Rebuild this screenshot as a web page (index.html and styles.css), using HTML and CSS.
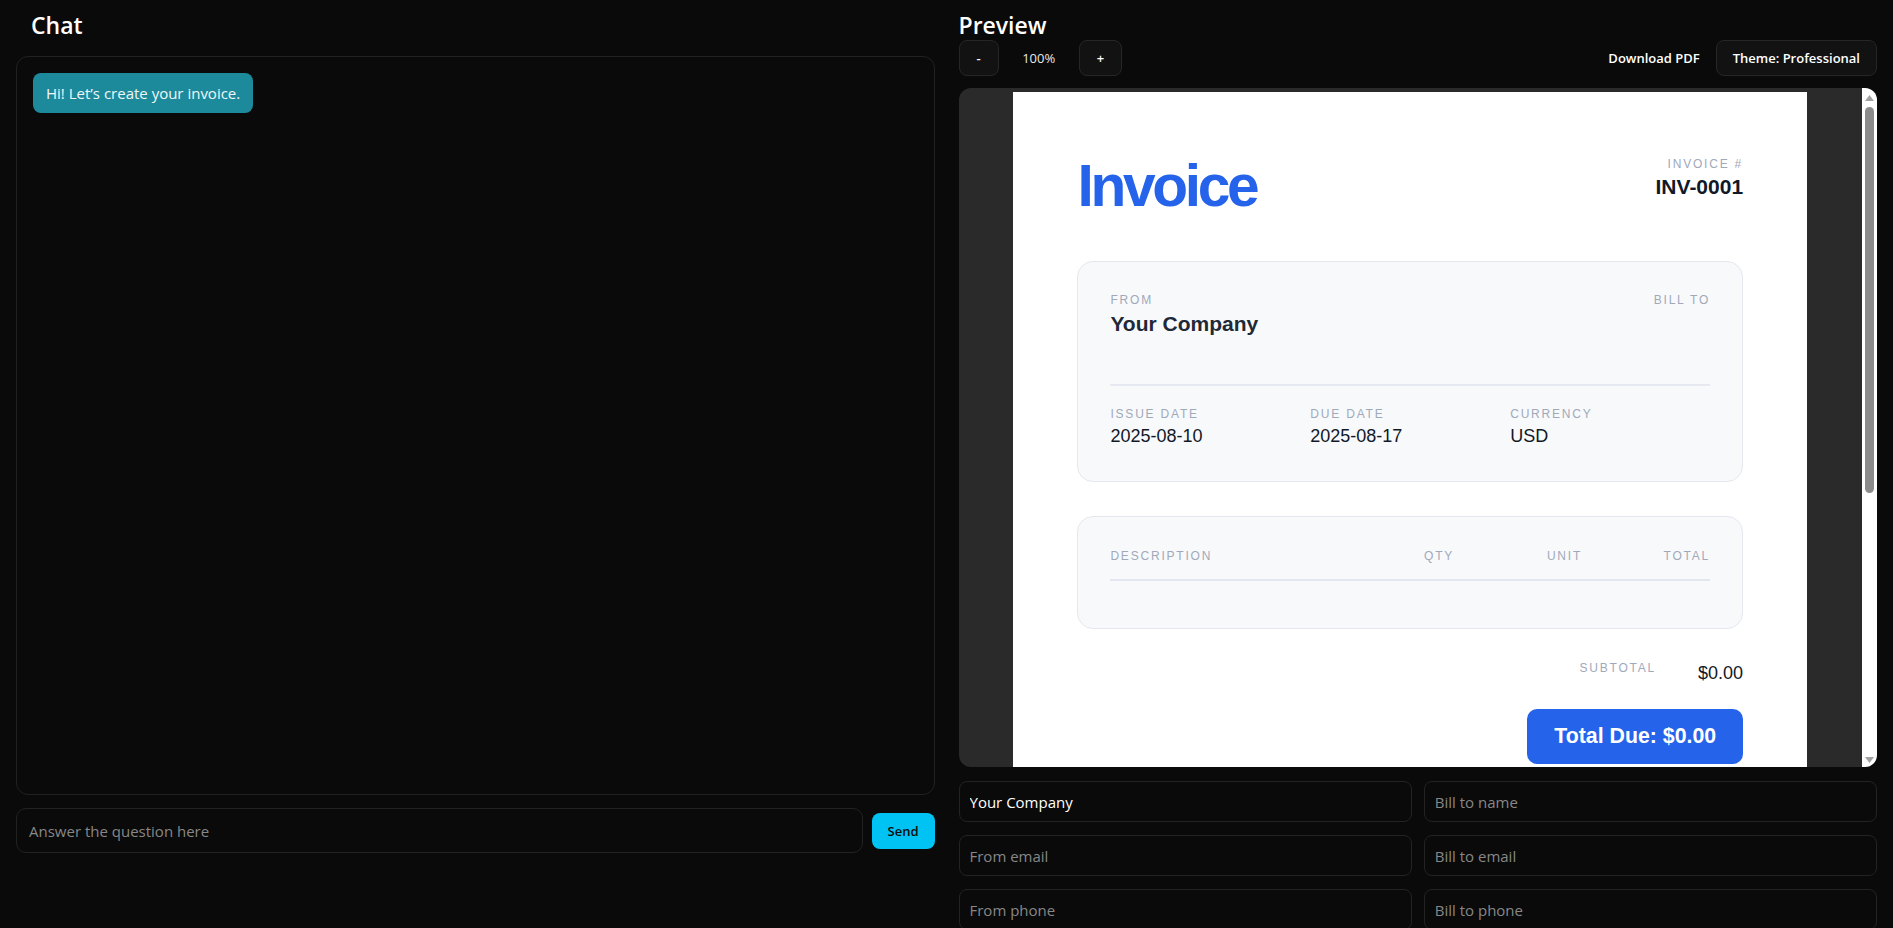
FILE: index.html
```html
<!DOCTYPE html>
<html lang="en">
<head>
<meta charset="utf-8">
<title>Invoice Chat</title>
<link rel="stylesheet" href="styles.css">
</head>
<body>
<div class="app">
  <section class="col chat-col">
    <h2 class="title chat-title">Chat</h2>
    <div class="chat-panel">
      <div class="bubble">Hi! Let’s create your invoice.</div>
    </div>
    <div class="chat-input-row">
      <input class="chat-input" type="text" placeholder="Answer the question here">
      <button class="send">Send</button>
    </div>
  </section>

  <section class="col preview-col">
    <h2 class="title">Preview</h2>
    <div class="toolbar">
      <div class="zoom">
        <button class="tbtn">-</button>
        <span class="zoom-val">100%</span>
        <button class="tbtn">+</button>
      </div>
      <div class="actions">
        <button class="dl">Download PDF</button>
        <button class="tbtn theme">Theme: Professional</button>
      </div>
    </div>

    <div class="frame">
      <div class="viewport">
        <div class="page">
          <div class="inv-head">
            <h1 class="inv-title">Invoice</h1>
            <div class="inv-meta">
              <div class="label">Invoice #</div>
              <div class="inv-no">INV-0001</div>
            </div>
          </div>

          <div class="card party">
            <div class="party-row">
              <div>
                <div class="label">From</div>
                <div class="party-name">Your Company</div>
              </div>
              <div class="billto">
                <div class="label">Bill To</div>
              </div>
            </div>
            <div class="divider"></div>
            <div class="dates">
              <div>
                <div class="label">Issue Date</div>
                <div class="val">2025-08-10</div>
              </div>
              <div>
                <div class="label">Due Date</div>
                <div class="val">2025-08-17</div>
              </div>
              <div>
                <div class="label">Currency</div>
                <div class="val">USD</div>
              </div>
            </div>
          </div>

          <div class="card items">
            <div class="items-head">
              <div class="label">Description</div>
              <div class="label num">Qty</div>
              <div class="label num">Unit</div>
              <div class="label num">Total</div>
            </div>
          </div>

          <div class="subtotal">
            <div class="label">Subtotal</div>
            <div class="sub-val">$0.00</div>
          </div>

          <div class="total">
            <div class="total-box">Total Due: $0.00</div>
          </div>
        </div>
      </div>
      <div class="scrollbar">
        <svg class="sb-arrow" width="9" height="6" viewBox="0 0 9 6"><polygon points="4.5,0 9,6 0,6" fill="#a3a3a3"/></svg>
        <div class="sb-thumb"></div>
        <div class="sb-space"></div>
        <svg class="sb-arrow" width="9" height="6" viewBox="0 0 9 6"><polygon points="0,0 9,0 4.5,6" fill="#a3a3a3"/></svg>
      </div>
    </div>

    <div class="form">
      <input class="field" type="text" value="Your Company">
      <input class="field" type="text" placeholder="Bill to name">
      <input class="field" type="text" placeholder="From email">
      <input class="field" type="text" placeholder="Bill to email">
      <input class="field" type="text" placeholder="From phone">
      <input class="field" type="text" placeholder="Bill to phone">
    </div>
  </section>
</div>
</body>
</html>
```

FILE: styles.css
```css
html, body {
  margin: 0;
  height: 100%;
  overflow: hidden;
  background: #0a0a0a;
}

body {
  font-family: "Open Sans", "Noto Sans", sans-serif;
  color: #ffffff;
}

.app {
  display: grid;
  grid-template-columns: 1fr 1fr;
  column-gap: 24px;
  padding: 11px 16px 0;
  height: 100vh;
  box-sizing: border-box;
}

.col {
  display: flex;
  flex-direction: column;
  min-width: 0;
}

.title {
  margin: 0;
  font-size: 23px;
  font-weight: 600;
  line-height: 29px;
  height: 29px;
  color: #ffffff;
}

.chat-title {
  padding-left: 15px;
}

/* Chat */
.chat-panel {
  margin-top: 16px;
  height: 739px;
  box-sizing: border-box;
  border: 1px solid #212121;
  border-radius: 12px;
  padding: 16px;
  display: flex;
  flex-direction: column;
  align-items: flex-start;
}

.bubble {
  background: #1d8a9c;
  color: #eef8fa;
  font-size: 15px;
  line-height: 20px;
  padding: 10px 13px;
  border-radius: 8px;
}

.chat-input-row {
  margin-top: 13px;
  display: flex;
  align-items: center;
  gap: 9px;
}

.chat-input {
  flex: 1;
  min-width: 0;
  height: 45px;
  box-sizing: border-box;
  background: #0a0a0a;
  border: 1px solid #222222;
  border-radius: 10px;
  padding: 0 12px;
  color: #ffffff;
  font: 15px "Open Sans", "Noto Sans", sans-serif;
  outline: none;
}

.chat-input::placeholder,
.field::placeholder {
  color: #878787;
}

.send {
  height: 36px;
  padding: 0 16px;
  border: none;
  border-radius: 8px;
  background: #00c3f4;
  color: #0a0a0a;
  font: 600 13px "Open Sans", "Noto Sans", sans-serif;
}

/* Preview toolbar */
.toolbar {
  display: flex;
  justify-content: space-between;
  align-items: center;
  height: 36px;
}

.zoom {
  display: flex;
  align-items: center;
  gap: 8px;
}

.tbtn {
  height: 36px;
  box-sizing: border-box;
  padding: 0 17px;
  background: #121212;
  border: 1px solid #262626;
  border-radius: 8px;
  color: #ffffff;
  font: 600 13px "Open Sans", "Noto Sans", sans-serif;
}

.zoom-val {
  width: 64px;
  text-align: center;
  font-size: 13px;
  color: #e8e8e8;
}

.actions {
  display: flex;
  align-items: center;
}

.dl {
  height: 36px;
  padding: 0 16px;
  background: transparent;
  border: none;
  color: #ffffff;
  font: 600 13px "Open Sans", "Noto Sans", sans-serif;
}

.tbtn.theme {
  padding: 0 16px;
}

/* Preview frame */
.frame {
  margin-top: 12px;
  height: 679px;
  display: flex;
  background: #2a2a2a;
  border-radius: 12px;
  overflow: hidden;
}

.viewport {
  flex: 1;
  min-width: 0;
  overflow: hidden;
  padding-top: 4px;
}

.scrollbar {
  width: 15px;
  flex: none;
  background: #ffffff;
  display: flex;
  flex-direction: column;
  align-items: center;
  padding: 7px 0 4px;
  box-sizing: border-box;
}

.sb-arrow {
  display: block;
  flex: none;
}

.sb-thumb {
  margin-top: 6px;
  width: 9px;
  height: 386px;
  border-radius: 5px;
  background: #8b8b8b;
}

.sb-space {
  flex: 1;
}

.page {
  width: 210mm;
  min-height: 297mm;
  margin: 0 auto;
  box-sizing: border-box;
  background: #ffffff;
  padding: 65px 64px 64px;
  font-family: "Liberation Sans", Arial, sans-serif;
  color: #111827;
}

.inv-head {
  display: flex;
  justify-content: space-between;
  align-items: flex-start;
  margin-bottom: 45px;
}

.inv-title {
  margin: 0;
  font-size: 58.67px;
  line-height: 1;
  font-weight: 700;
  color: #2563eb;
  letter-spacing: -3.3px;
}

.inv-meta {
  text-align: right;
}

.label {
  font-size: 12px;
  letter-spacing: 0.15em;
  text-transform: uppercase;
  color: #a0a9ba;
}

.inv-no {
  margin-top: 4px;
  font-size: 21px;
  font-weight: 700;
  color: #111827;
}

.card {
  border: 1px solid #e4e8ee;
  border-radius: 16px;
  background: #f8f9fb;
}

.party {
  padding: 31px 32px 34px;
}

.party-row {
  display: grid;
  grid-template-columns: 1fr 1fr;
}

.billto {
  text-align: right;
}

.party-name {
  margin-top: 4px;
  font-size: 21px;
  line-height: 25px;
  font-weight: 700;
  color: #1f2937;
}

.divider {
  margin-top: 48px;
  border-top: 2px solid #e6e9ef;
}

.dates {
  display: grid;
  grid-template-columns: repeat(3, 1fr);
  padding-top: 21px;
}

.val {
  margin-top: 5px;
  font-size: 18px;
  line-height: 21px;
  color: #111827;
}

.items {
  margin-top: 34px;
  padding: 32px 32px 47px;
}

.items-head {
  display: grid;
  grid-template-columns: 1fr 128px 128px 128px;
  padding-bottom: 16px;
  border-bottom: 2px solid #e2e7ef;
}

.items-head .num {
  text-align: right;
}

.subtotal {
  margin-top: 32px;
  display: flex;
  justify-content: flex-end;
  align-items: flex-start;
  gap: 42px;
}

.sub-val {
  margin-top: 2px;
  font-size: 18px;
  line-height: 21px;
  color: #111827;
}

.total {
  margin-top: 25px;
  display: flex;
  justify-content: flex-end;
}

.total-box {
  background: #2563eb;
  color: #ffffff;
  font-size: 21.3px;
  line-height: 25px;
  font-weight: 700;
  padding: 15px 27px;
  border-radius: 10px;
}

/* Form */
.form {
  margin-top: 14px;
  display: grid;
  grid-template-columns: 1fr 1fr;
  gap: 13px 12px;
}

.field {
  height: 41px;
  box-sizing: border-box;
  min-width: 0;
  background: #0a0a0a;
  border: 1px solid #232323;
  border-radius: 8px;
  padding: 0 10px;
  color: #ffffff;
  font: 15px "Open Sans", "Noto Sans", sans-serif;
  outline: none;
}
```
